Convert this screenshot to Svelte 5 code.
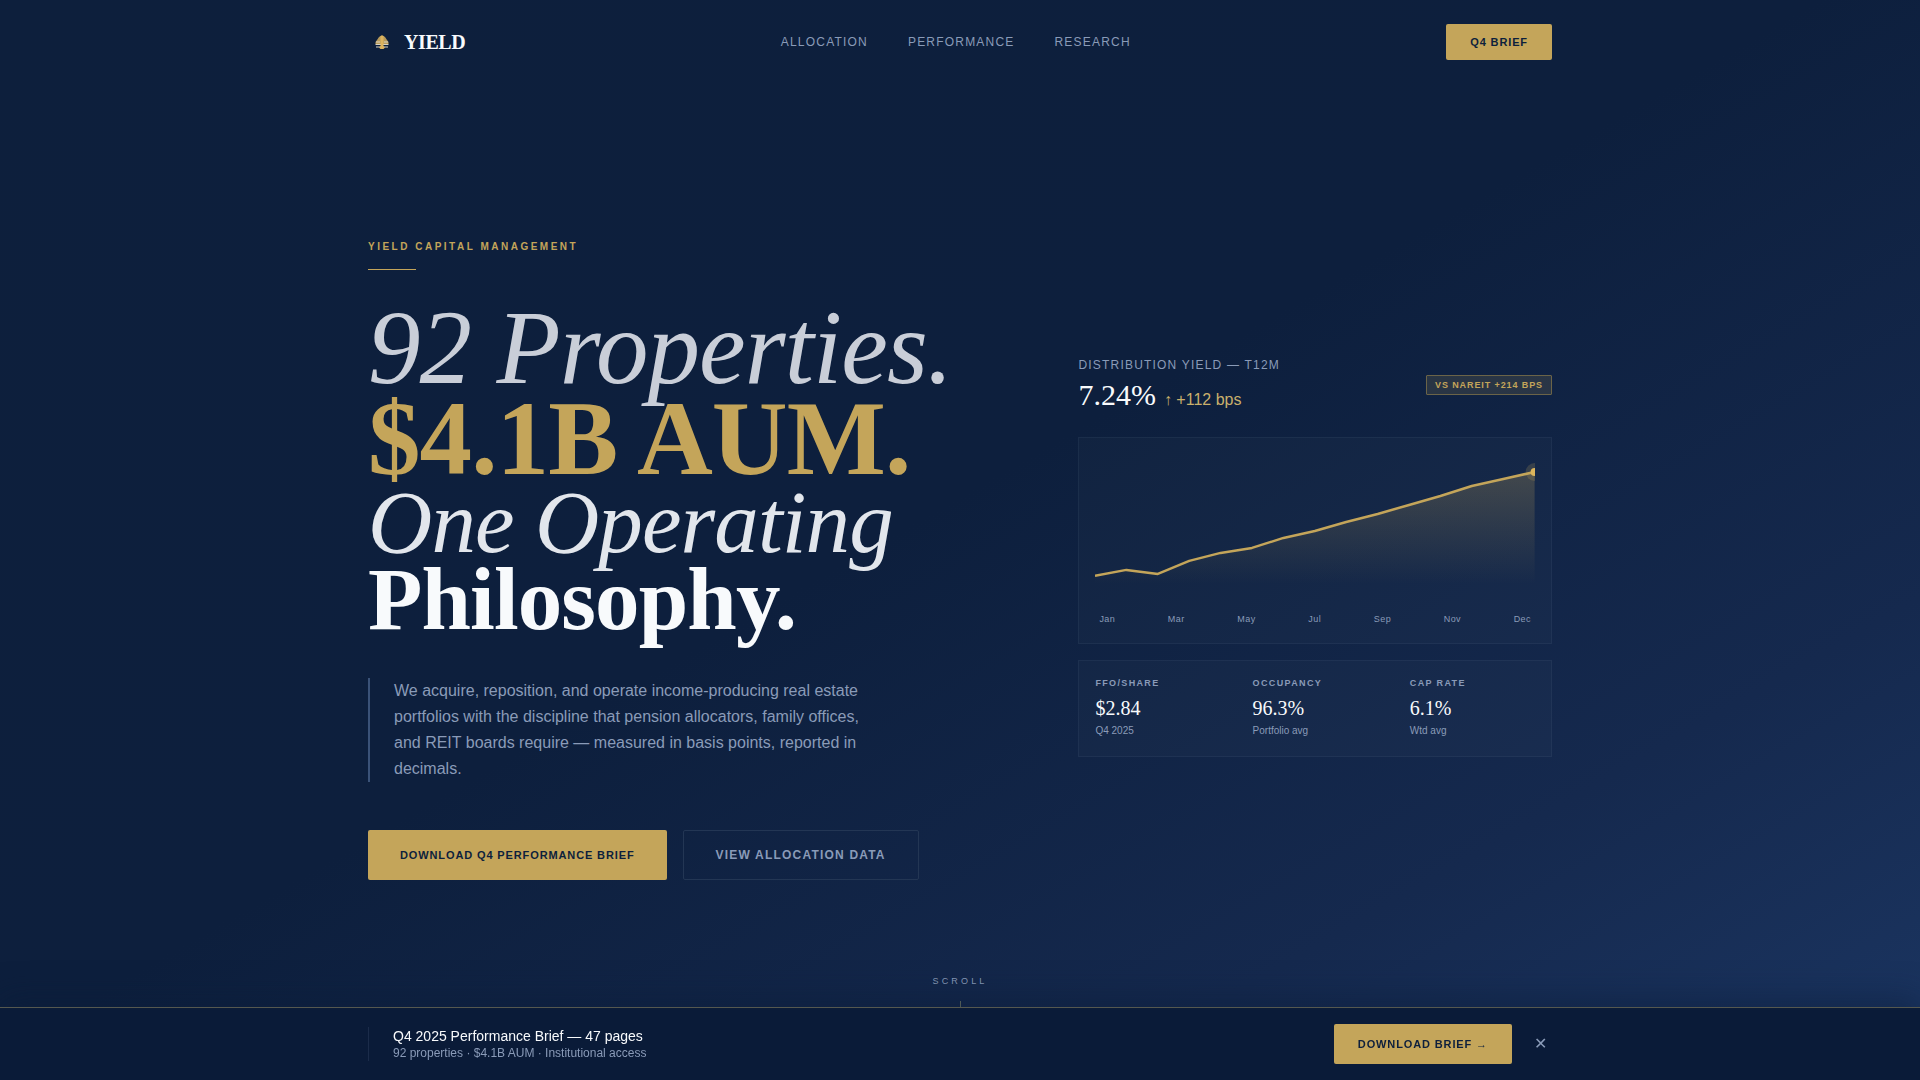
<script>
  const links = ['Allocation', 'Performance', 'Research'];
  const months = ['Jan', 'Mar', 'May', 'Jul', 'Sep', 'Nov', 'Dec'];
  const stats = [
    { label: 'FFO/Share', value: '$2.84', note: 'Q4 2025' },
    { label: 'Occupancy', value: '96.3%', note: 'Portfolio avg' },
    { label: 'Cap Rate', value: '6.1%', note: 'Wtd avg' }
  ];
  const series = [122, 116, 120, 107, 99, 94, 84, 77, 68, 60, 51, 42, 32, 25, 18];
  const step = 440 / (series.length - 1);
  const line = series.map((y, i) => `${i ? 'L' : 'M'}${(i * step).toFixed(1)} ${y}`).join(' ');
  const area = `${line} L440 130 L0 130 Z`;
  let barOpen = $state(true);
</script>

<div class="page">
  <header class="nav wrap">
    <a class="brand" href="#top">
      <svg viewBox="0 0 28 28" width="28" height="28" aria-hidden="true">
        <path d="M14 7 L17 9 L19 12 L20.5 14 V16 H7.500 V14 L9 12 L11 9 Z" fill="#b89a5a" />
        <path d="M8 14h4M16 14h4M7.500 16.500h13M8 19h12" stroke="#d9d4c4" stroke-width="1.200" />
        <path d="M12.500 8h3v10l1.500 1.500-1.500 1.500h-3L11 19.500l1.500-1.500z" fill="#dcb35e" />
      </svg>
      <span>YIELD</span>
    </a>
    <nav>
      {#each links as l}<a href="#{l.toLowerCase()}">{l}</a>{/each}
    </nav>
    <button class="gold small">Q4 Brief</button>
  </header>

  <main class="hero wrap" id="top">
    <section class="copy">
      <p class="eyebrow">Yield Capital Management</p>
      <h1>
        <span class="l1">92 Properties.</span>
        <span class="l2">$4.1B AUM.</span>
        <span class="l3">One Operating</span>
        <span class="l4">Philosophy.</span>
      </h1>
      <p class="lead">
        We acquire, reposition, and operate income-producing real estate portfolios with the discipline that pension
        allocators, family offices, and REIT boards require — measured in basis points, reported in decimals.
      </p>
      <div class="actions">
        <button class="gold large">Download Q4 Performance Brief</button>
        <button class="ghost">View Allocation Data</button>
      </div>
    </section>

    <section class="data">
      <div class="head">
        <div>
          <p class="metric">Distribution Yield — T12M</p>
          <p class="figure"><strong>7.24%</strong><span>↑ +112 bps</span></p>
        </div>
        <span class="badge">vs NAREIT +214 bps</span>
      </div>
      <div class="card chart">
        <svg viewBox="0 0 440 140" role="img" aria-label="Distribution yield over twelve months">
          <defs>
            <linearGradient id="fill" x1="0" y1="0" x2="0" y2="1">
              <stop offset="0" stop-color="#c4a55a" stop-opacity="0.26" />
              <stop offset="1" stop-color="#c4a55a" stop-opacity="0" />
            </linearGradient>
          </defs>
          <path d={area} fill="url(#fill)" />
          <path d={line} fill="none" stroke="#c4a55a" stroke-width="2.500" stroke-linejoin="round" />
          <circle cx="440" cy="18" r="9" fill="#c4a55a" opacity="0.2" />
          <circle cx="440" cy="18" r="4" fill="#dcb55c" />
        </svg>
        <div class="months">{#each months as m}<span>{m}</span>{/each}</div>
      </div>
      <dl class="card stats">
        {#each stats as s}
          <div>
            <dt>{s.label}</dt>
            <dd class="value">{s.value}</dd>
            <dd class="note">{s.note}</dd>
          </div>
        {/each}
      </dl>
    </section>
  </main>

  <div class="scroll"><span>Scroll</span><i></i></div>

  {#if barOpen}
    <aside class="bar">
      <div class="wrap row">
        <div class="info">
          <p class="title">Q4 2025 Performance Brief — 47 pages</p>
          <p class="sub">92 properties · $4.1B AUM · Institutional access</p>
        </div>
        <button class="gold medium">Download Brief →</button>
        <button class="close" aria-label="Dismiss" onclick={() => (barOpen = false)}>✕</button>
      </div>
    </aside>
  {/if}
</div>

<style>
  :global(body) {
    background: #0d1f3c;
  }
  .page {
    min-height: 100vh;
    box-sizing: border-box;
    display: flex;
    flex-direction: column;
    position: relative;
    overflow: hidden;
    background: linear-gradient(150deg, #0d1f3c 0%, #0d1f3d 48%, #15294e 78%, #1a335e 96%);
    color: #f8fafc;
    font-family: 'Liberation Sans', Arial, sans-serif;
  }
  p, h1, dl, dd {
    margin: 0;
  }
  a {
    color: inherit;
    text-decoration: none;
  }
  .wrap {
    width: 100%;
    max-width: 1280px;
    margin: 0 auto;
    padding: 0 48px;
    box-sizing: border-box;
  }
  .nav {
    display: flex;
    align-items: center;
    justify-content: space-between;
    padding-top: 24px;
    padding-bottom: 24px;
  }
  .brand {
    display: flex;
    align-items: center;
    gap: 8px;
    font: bold 20px/28px 'Liberation Serif', serif;
    letter-spacing: -0.02em;
  }
  nav {
    display: flex;
    gap: 40px;
    font-size: 12px;
    letter-spacing: 0.1em;
    text-transform: uppercase;
    color: #8a9bb8;
  }
  button {
    font: bold 11px/16px 'Liberation Sans', Arial, sans-serif;
    letter-spacing: 0.08em;
    text-transform: uppercase;
    border: 0;
    border-radius: 2px;
    cursor: pointer;
  }
  .gold {
    background: #c4a55a;
    color: #0d1f3c;
  }
  .small {
    padding: 10px 24px;
  }
  .medium {
    padding: 12px 24px;
  }
  .large {
    padding: 16px 32px;
  }
  .ghost {
    padding: 16px 32px;
    border: 1px solid #233654;
    background: transparent;
    color: #8a9bb8;
    font-size: 12px;
    letter-spacing: 0.1em;
  }
  .hero {
    flex: 1;
    display: grid;
    grid-template-columns: 3fr 2fr;
    align-items: center;
    padding-bottom: 46px;
  }
  .eyebrow {
    font-size: 10px;
    line-height: 16px;
    font-weight: bold;
    letter-spacing: 0.25em;
    text-transform: uppercase;
    color: #c4a55a;
  }
  .eyebrow::after {
    content: '';
    display: block;
    width: 48px;
    height: 1px;
    margin-top: 14px;
    background: #c4a55a;
  }
  h1 {
    margin-top: 32px;
    font-family: 'Liberation Serif', serif;
    font-weight: normal;
    font-size: 89px;
    line-height: 77px;
    letter-spacing: -0.01em;
  }
  h1 span {
    display: block;
  }
  .l1, .l2 {
    font-size: 105px;
    line-height: 91px;
  }
  .l1 {
    font-style: italic;
    color: #c9ced8;
  }
  .l2 {
    font-weight: bold;
    color: #c4a55a;
  }
  .l3 {
    font-style: italic;
    color: #e2e6ec;
  }
  .l4 {
    font-weight: bold;
  }
  .lead {
    max-width: 480px;
    margin-top: 40px;
    padding-left: 24px;
    border-left: 2px solid #3a5278;
    font-size: 16px;
    line-height: 26px;
    color: #8a9bb8;
  }
  .actions {
    display: flex;
    gap: 16px;
    margin-top: 48px;
  }
  .data {
    padding-bottom: 4px;
  }
  .head {
    display: flex;
    align-items: center;
    justify-content: space-between;
    margin-bottom: 24px;
  }
  .metric {
    font-size: 12px;
    line-height: 16px;
    letter-spacing: 0.1em;
    text-transform: uppercase;
    color: #8a9bb8;
  }
  .figure {
    display: flex;
    align-items: baseline;
    gap: 8px;
    margin-top: 4px;
    color: #c9b06c;
    font-size: 16px;
  }
  .figure strong {
    color: #f8fafc;
    font: 30px/36px 'Liberation Serif', serif;
  }
  .badge {
    padding: 3px 8px;
    border: 1px solid #6b6448;
    border-radius: 1px;
    background: rgba(196, 165, 90, 0.15);
    color: #c4a55a;
    font-size: 9px;
    line-height: 12px;
    font-weight: bold;
    letter-spacing: 0.1em;
    text-transform: uppercase;
  }
  .card {
    padding: 16px;
    border: 1px solid rgba(138, 170, 190, 0.08);
    background: rgba(138, 180, 180, 0.035);
  }
  .chart svg {
    display: block;
    width: 100%;
    height: auto;
  }
  .months {
    display: flex;
    justify-content: space-between;
    padding: 20px 4px 2px;
    font-size: 9px;
    line-height: 12px;
    letter-spacing: 0.05em;
    color: #8a9bb8;
  }
  .stats {
    display: grid;
    grid-template-columns: repeat(3, 1fr);
    gap: 32px;
    margin-top: 16px;
  }
  dt {
    font-size: 9px;
    line-height: 12px;
    font-weight: bold;
    letter-spacing: 0.15em;
    text-transform: uppercase;
    color: #8a9bb8;
  }
  .value {
    margin-top: 5px;
    font: 20px/28px 'Liberation Serif', serif;
  }
  .note {
    font-size: 10px;
    line-height: 18px;
    color: #8a9bb8;
  }
  .scroll {
    position: absolute;
    bottom: 40px;
    left: 0;
    right: 0;
    display: flex;
    flex-direction: column;
    align-items: center;
    gap: 14px;
    font-size: 9px;
    line-height: 12px;
    letter-spacing: 0.35em;
    text-transform: uppercase;
    color: #8a9bb8;
  }
  .scroll i {
    width: 1px;
    height: 39px;
    background: #6d7564;
  }
  .bar {
    position: fixed;
    left: 0;
    right: 0;
    bottom: 0;
    border-top: 1px solid #55584f;
    background: #0a1b38;
    box-shadow: 0 -8px 32px rgba(10, 27, 56, 0.5);
  }
  .row {
    display: flex;
    align-items: center;
    padding-top: 16px;
    padding-bottom: 16px;
  }
  .info {
    margin-right: auto;
    padding-left: 24px;
    border-left: 1px solid #1b2c4a;
  }
  .title {
    font-size: 14px;
    line-height: 18px;
  }
  .sub {
    font-size: 12px;
    line-height: 16px;
    color: #8a9bb8;
  }
  .close {
    width: 24px;
    margin-left: 16px;
    padding: 4px 0;
    background: transparent;
    color: #8a9bb8;
    font-size: 16px;
    font-weight: normal;
    letter-spacing: 0;
  }
</style>
